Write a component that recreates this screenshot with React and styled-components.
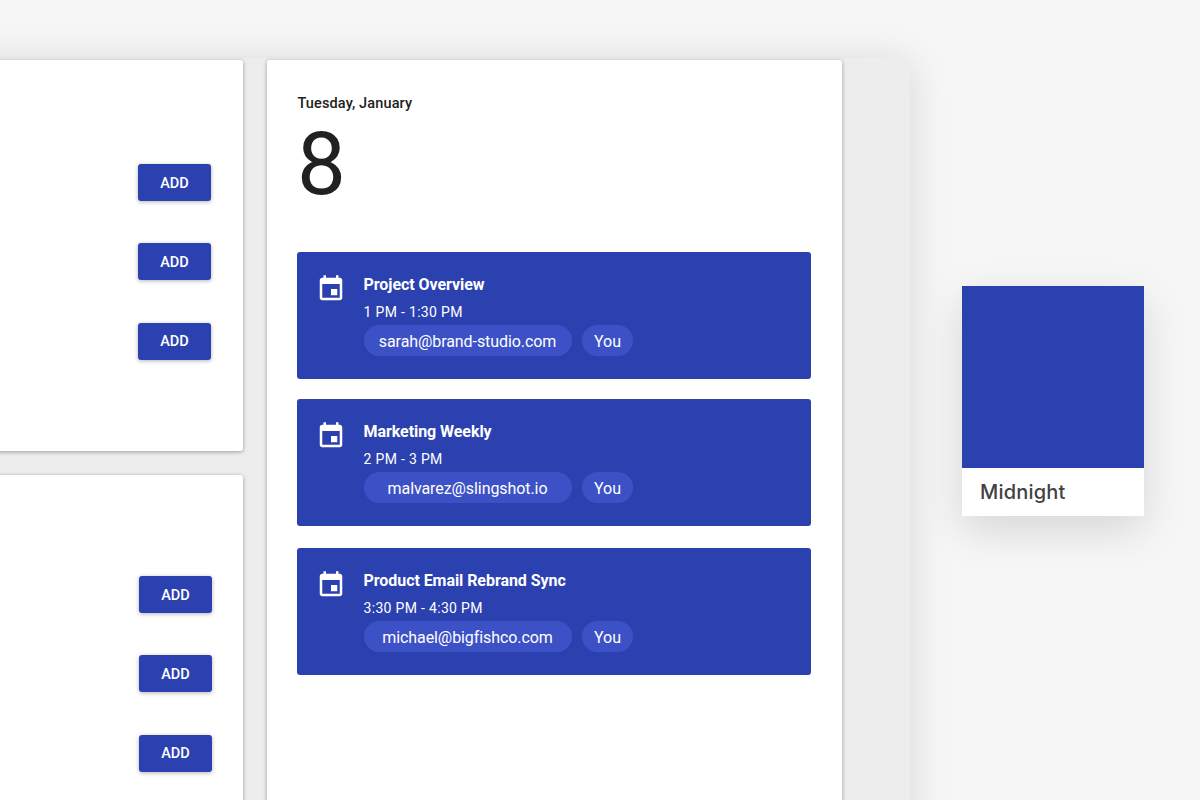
import styled, { createGlobalStyle } from "styled-components";

const blue = "#2c41b0";

const Global = createGlobalStyle`
  html, body { margin: 0; height: 100%; background: #f6f6f6; }
  * { box-sizing: border-box; }
`;

const Stage = styled.div`
  width: 1200px; height: 800px; overflow: hidden; background: #f6f6f6;
  display: flex; align-items: flex-start;
  font-family: Roboto, "Liberation Sans", sans-serif;
`;
const Win = styled.div`
  flex: none; width: 1010px; height: 900px; margin: 58px 0 0 -100px;
  padding: 2px 68px 0 0;
  display: flex; gap: 24px;
  background: #ededed; border-radius: 8px;
  box-shadow: 0 4px 40px rgba(0,0,0,0.13);
`;
const Side = styled.div`flex: none; width: 343px; display: flex; flex-direction: column; gap: 24px;`;
const AddCard = styled.div`
  flex: none; height: ${({ $h }) => $h}px;
  padding: ${({ $top }) => $top}px ${({ $right }) => $right}px 0 0;
  display: flex; flex-direction: column; align-items: flex-end; gap: 42.4px;
  background: #fff; border-radius: 3px;
  box-shadow: 0 1px 4px rgba(0,0,0,0.34);
`;
const AddBtn = styled.button`
  width: 73px; height: 37px; padding: 1px 0 0; border: 0; border-radius: 3px;
  background: ${blue}; color: #fff;
  font: 500 14.5px Roboto, sans-serif;
  box-shadow: 0 1px 4px rgba(0,0,0,0.3);
`;
const Day = styled.div`
  flex: none; width: 575px; height: 900px; padding: 35px 31px 0 30px;
  background: #fff; border-radius: 3px;
  box-shadow: 0 1px 4px rgba(0,0,0,0.34);
`;
const DateLabel = styled.div`padding-left: 0.5px; font-size: 14.5px; font-weight: 500; line-height: 18px; letter-spacing: 0.13px; color: #212121;`;
const DateNum = styled.div`margin: -2px 0 0; font-size: 87px; font-weight: 400; line-height: 106px; color: #212121;`;
const Events = styled.div`margin-top: 35px; display: flex; flex-direction: column;`;
const Event = styled.div`
  height: 127px; margin-top: ${({ $gap }) => $gap}px; padding: 22px 0 0 18.5px;
  display: flex; gap: 18px;
  background: ${blue}; border-radius: 3px; color: #fff;
`;
const EventIcon = styled.svg`flex: none; width: 30px; height: 30px; fill: #fff;`;
const EventBody = styled.div`display: flex; flex-direction: column; align-items: flex-start;`;
const EventTitle = styled.div`font-size: 16px; font-weight: 700; line-height: 22px; letter-spacing: -0.06px;`;
const EventTime = styled.div`margin-top: 7px; font-size: 14px; line-height: 18px; letter-spacing: 0.32px;`;
const Guests = styled.div`margin-top: 4px; display: flex; gap: 10.5px;`;
const Guest = styled.div`
  width: ${({ $w }) => $w}px; height: 31px; padding-top: 1px;
  display: flex; align-items: center; justify-content: center;
  background: #3d51c6; border-radius: 16px;
  font-size: 16px; letter-spacing: -0.08px;
`;
const Swatch = styled.div`
  flex: none; width: 182px; margin: 286px 0 0 52px;
  background: #fff;
  box-shadow: 0 14px 40px rgba(0,0,0,0.13);
`;
const SwatchColor = styled.div`height: 182px; background: ${blue};`;
const SwatchName = styled.div`
  height: 48px; padding-left: 18px;
  display: flex; align-items: center;
  font: 500 20px Inter, sans-serif; letter-spacing: 0.2px; color: #414141;
`;

const events = [
  { title: "Project Overview", time: "1 PM - 1:30 PM", guest: "sarah@brand-studio.com", gap: 0 },
  { title: "Marketing Weekly", time: "2 PM - 3 PM", guest: "malvarez@slingshot.io", gap: 20 },
  { title: "Product Email Rebrand Sync", time: "3:30 PM - 4:30 PM", guest: "michael@bigfishco.com", gap: 22 },
];

function AddButtons() {
  return (
    <>
      <AddBtn>ADD</AddBtn>
      <AddBtn>ADD</AddBtn>
      <AddBtn>ADD</AddBtn>
    </>
  );
}

export default function App() {
  return (
    <Stage>
      <Global />
      <Win>
        <Side>
          <AddCard $h={391} $top={104} $right={32}><AddButtons /></AddCard>
          <AddCard $h={500} $top={101} $right={31}><AddButtons /></AddCard>
        </Side>
        <Day>
          <DateLabel>Tuesday, January</DateLabel>
          <DateNum>8</DateNum>
          <Events>
            {events.map((ev) => (
              <Event key={ev.title} $gap={ev.gap}>
                <EventIcon viewBox="0 0 24 24">
                  <path d="M17 12h-5v5h5v-5zM16 1v2H8V1H6v2H5c-1.11 0-1.99.9-1.99 2L3 19c0 1.1.89 2 2 2h14c1.1 0 2-.9 2-2V5c0-1.1-.9-2-2-2h-1V1h-2zm3 18H5V8h14v11z" />
                </EventIcon>
                <EventBody>
                  <EventTitle>{ev.title}</EventTitle>
                  <EventTime>{ev.time}</EventTime>
                  <Guests>
                    <Guest $w={208}>{ev.guest}</Guest>
                    <Guest $w={51}>You</Guest>
                  </Guests>
                </EventBody>
              </Event>
            ))}
          </Events>
        </Day>
      </Win>
      <Swatch>
        <SwatchColor />
        <SwatchName>Midnight</SwatchName>
      </Swatch>
    </Stage>
  );
}
